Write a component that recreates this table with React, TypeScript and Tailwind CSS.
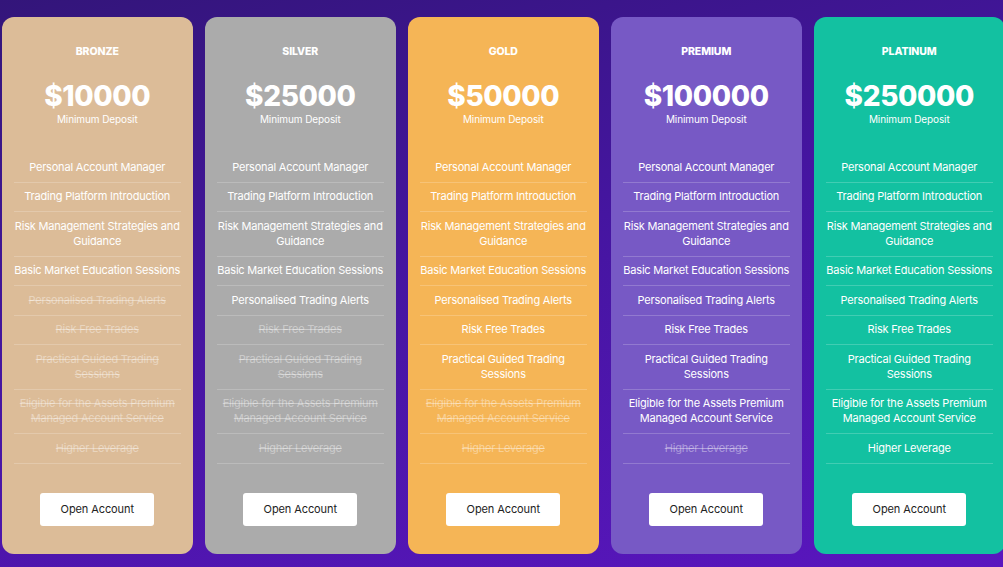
import React from "react";

type Plan = { name: string; price: string; bg: string; enabled: number };

const features: string[] = [
  "Personal Account Manager",
  "Trading Platform Introduction",
  "Risk Management Strategies and Guidance",
  "Basic Market Education Sessions",
  "Personalised Trading Alerts",
  "Risk Free Trades",
  "Practical Guided Trading Sessions",
  "Eligible for the Assets Premium Managed Account Service",
  "Higher Leverage",
];

const plans: Plan[] = [
  { name: "BRONZE", price: "$10000", bg: "bg-[#dcbc98]", enabled: 4 },
  { name: "SILVER", price: "$25000", bg: "bg-[#ababab]", enabled: 5 },
  { name: "GOLD", price: "$50000", bg: "bg-[#f5b556]", enabled: 7 },
  { name: "PREMIUM", price: "$100000", bg: "bg-[#7759c5]", enabled: 8 },
  { name: "PLATINUM", price: "$250000", bg: "bg-[#13c1a1]", enabled: 9 },
];

function Card({ p }: { p: Plan }) {
  return (
    <div
      className={`${p.bg} w-[190.5px] shrink-0 rounded-[12px] px-[12px] pt-[28px] pb-[28px] flex flex-col items-center text-white`}
    >
      <div className="text-[10.5px] font-extrabold leading-[14px] tracking-[-0.1px]">{p.name}</div>
      <div className="mt-[21px] text-[28px] font-extrabold leading-[32px] tracking-[-0.4px]">{p.price}</div>
      <div className="mt-[1px] text-[10px] leading-[12px] tracking-[-0.1px]">Minimum Deposit</div>
      <div className="mt-[28px] w-full flex flex-col">
        {features.map((f, i) => {
          const on = i < p.enabled;
          return (
            <div
              key={f}
              className={`border-b border-white/20 py-[6.75px] text-center text-[11px] leading-[15px] tracking-[-0.2px] ${
                on ? "text-white" : "text-white/40 line-through"
              }`}
            >
              {f}
            </div>
          );
        })}
      </div>
      <button className="mt-[29px] w-[114px] h-[33px] bg-white rounded-[3px] text-[11px] text-[#222] leading-[33px] tracking-[-0.1px]">
        Open Account
      </button>
    </div>
  );
}

export default function App() {
  return (
    <div
      className="w-[1003px] h-[567px] overflow-hidden bg-[linear-gradient(165deg,#33157a_0%,#4515a0_45%,#5a16bf_100%)] flex items-start gap-[12.5px] pl-[2px] pt-[17px]"
      style={{ fontFamily: "Inter, 'Noto Sans', sans-serif" }}
    >
      {plans.map((p) => (
        <Card key={p.name} p={p} />
      ))}
    </div>
  );
}
